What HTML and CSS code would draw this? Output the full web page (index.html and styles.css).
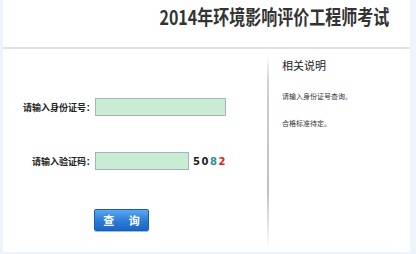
FILE: index.html
```html
<!DOCTYPE html>
<html lang="zh-CN">
<head>
    <meta charset="UTF-8" />
    <title>2014年环境影响评价工程师考试</title>
    <link rel="stylesheet" href="styles.css">
</head>
<body>
<div class="page">
    <div class="header">
        <h1><span class="title-text">2014年环境影响评价工程师考试</span></h1>
    </div>
    <div class="main">
        <form class="query">
            <div class="row">
                <label class="row-label">请输入身份证号：</label>
                <input type="text" class="field" />
            </div>
            <div class="row">
                <label class="row-label">请输入验证码：</label>
                <input type="text" class="field short" />
                <span class="captcha"><b>5</b><b>0</b><b class="c-teal">8</b><b class="c-red">2</b></span>
            </div>
            <div class="actions">
                <button type="button" class="search-button">查 询</button>
            </div>
        </form>
        <div class="notes">
            <h2>相关说明</h2>
            <p>请输入身份证号查询。</p>
            <p>合格标准待定。</p>
        </div>
    </div>
</div>
</body>
</html>
```

FILE: styles.css
```css
body {
  margin: 0;
  background: #edf4fc;
  font-family: "Noto Sans CJK SC", "Noto Sans", sans-serif;
  color: #222;
}
.page {
  margin: 0 6px 0 3px;
  background: #fff;
}
.header {
  height: 47px;
  border-bottom: 2px solid #e2e2e2;
}
.header h1 {
  margin: 0;
  padding: 5px 21px 0 0;
  font-size: 20px;
  line-height: 24px;
  text-align: right;
  color: #333;
}
.title-text {
  display: inline-block;
  transform: scaleX(0.8); /* police condensée comme l'original */
  transform-origin: right center;
}
.main {
  display: flex;
  height: 203px;
}
.query {
  width: 264px;
  padding-top: 49px;
}
.row {
  display: flex;
  align-items: center;
  height: 18px;
  margin-bottom: 36px;
}
.row-label {
  width: 92px;
  text-align: right;
  font-size: 9px;
  font-weight: bold;
  color: #222;
}
.field {
  box-sizing: border-box;
  width: 131px;
  height: 18px;
  margin: 0;
  padding: 0 2px;
  border: 1px solid #a3b3c3;
  background: #c8edd2;
}
.field.short {
  width: 94px;
}
.captcha {
  display: flex;
  align-items: center;
  height: 19px;
  padding: 0 3px 0 4px;
  font-family: "DejaVu Sans", sans-serif;
  font-size: 10px;
  letter-spacing: 1.5px;
  color: #222;
}
.captcha b {
  font-weight: bold;
}
.captcha .c-teal {
  color: #2b8f95;
}
.captcha .c-red {
  color: #d4202c;
}
.actions {
  padding-left: 91px;
}
.search-button {
  width: 55px;
  height: 22px;
  padding: 0;
  border: 1px solid #1a5db4;
  border-radius: 2px;
  background: linear-gradient(#5aa8ee, #2f7fd8 50%, #1d66c6);
  color: #fff;
  font-family: "Noto Sans CJK SC", sans-serif;
  font-size: 11px;
  font-weight: bold;
  letter-spacing: 6px;
  text-indent: 6px;
  box-shadow: 0 1px 0 #9cc0e8;
}
.notes {
  flex: 1;
  margin: 6px 0 4px;
  padding: 3px 0 0 13px;
  border-left: 2px solid #ccc;
  border-image: linear-gradient(rgba(200,200,200,0), #d0d0d0 15%, #c0c0c0 70%, rgba(200,200,200,0)) 1;
}
.notes h2 {
  margin: 0 0 19px;
  font-size: 11px;
  line-height: 14px;
  font-weight: normal;
  color: #222;
}
.notes p {
  margin: 0 0 17px;
  font-size: 7px;
  line-height: 10px;
  color: #333;
}
```
